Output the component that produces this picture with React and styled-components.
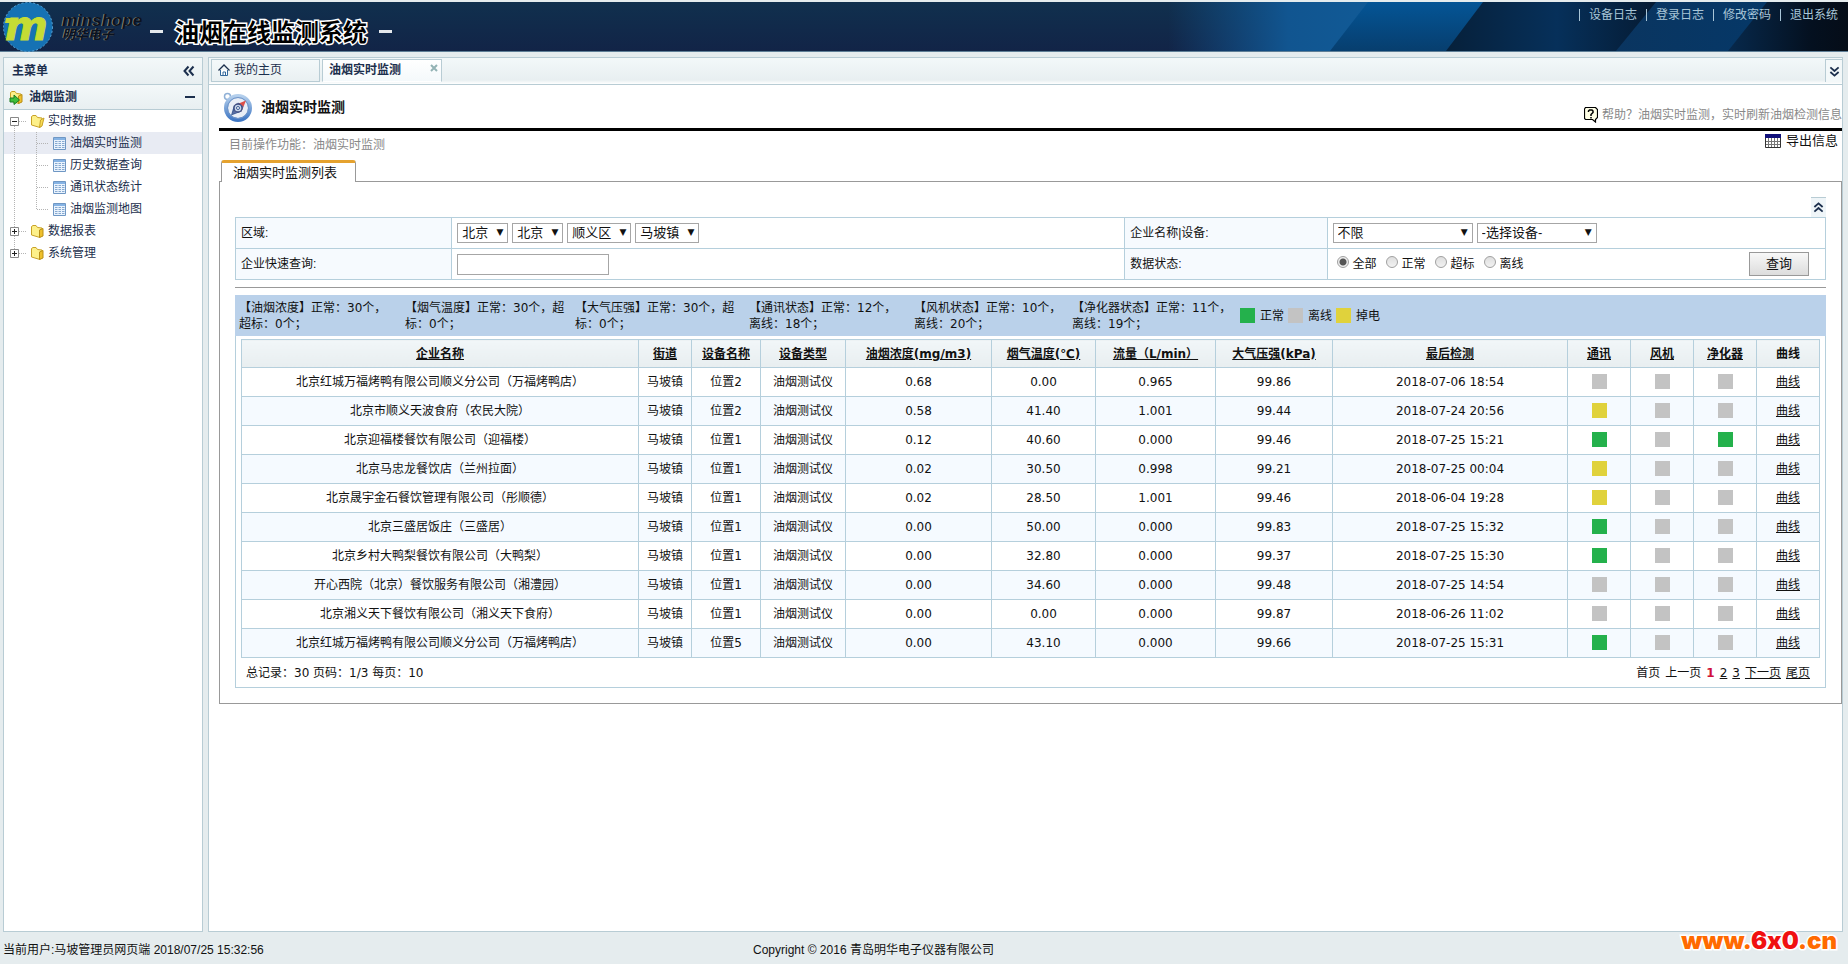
import React, { useState } from 'react';
import styled, { createGlobalStyle } from 'styled-components';

const cjk = '"Noto Sans CJK SC", sans-serif';
const ui = `"Liberation Sans", ${cjk}`;
const wide = `"DejaVu Sans", ${cjk}`;
const line = '#b8ccd4';
const grid = '#b5cfdc';
const ink = '#1c2f4d';

const GlobalStyle = createGlobalStyle`
  *, *::before, *::after { box-sizing: border-box; }
  body { margin: 0; background: #e5ecee; font: 12px/16px ${ui}; color: #111; }
  ul { list-style: none; margin: 0; padding: 0; }
  svg { display: block; flex: none; }
  button, select, input { font: inherit; color: inherit; }
`;

const Page = styled.div`
  position: relative;
  display: flex;
  flex-direction: column;
  min-height: 100vh;
  padding-top: 2px;
`;

/* ---------- banner ---------- */
const Banner = styled.header`
  position: relative;
  display: flex;
  align-items: flex-start;
  height: 50px;
  padding-right: 10px;
  background: linear-gradient(#10304e, #122447);
  border-bottom: 1px solid #5f7f97;
`;
const BannerArt = styled.svg`
  position: absolute;
  top: 0;
  right: 0;
`;
const Brand = styled.div`
  display: flex;
  flex-direction: column;
  width: 95px;
  padding: 12px 0 0 7px;
  font: italic bold 17px/14px ${ui};
  color: #0b1320;
  text-shadow: -1px 0 0 #8a8478;
`;
const BrandSub = styled.span`
  font-size: 13px;
  line-height: 14px;
`;
const SystemTitle = styled.h1`
  display: flex;
  align-items: center;
  gap: 12px;
  margin: 0;
  padding-top: 13px;
  font: bold 24px/32px ${cjk};
  color: #000;
  -webkit-text-stroke: 3px #fff;
  paint-order: stroke fill;
`;
const TitleDash = styled.span`
  width: 13px;
  height: 3px;
  background: #e4e8ec;
`;
const BannerLinks = styled.nav`
  position: relative;
  display: flex;
  margin-left: auto;
  padding-top: 5px;
`;
const BannerLink = styled.a`
  display: flex;
  align-items: center;
  color: #a9c6d8;
  text-decoration: none;
  &::before {
    content: '';
    width: 1px;
    height: 12px;
    margin: 0 9px;
    background: #a9c6d8;
  }
`;

/* ---------- frame ---------- */
const Frame = styled.div`
  display: flex;
  flex: 1;
  gap: 5px;
  padding: 5px 5px 0 3px;
`;
const Sidebar = styled.aside`
  flex: none;
  width: 200px;
  background: #fff;
  border: 1px solid ${line};
`;
const SideHead = styled.div`
  display: flex;
  align-items: center;
  justify-content: space-between;
  height: ${p => p.$h}px;
  padding: 0 7px 0 ${p => p.$pad}px;
  border-bottom: 1px solid ${line};
  background: linear-gradient(#f3f8f9, #e8eff1);
  color: ${ink};
  font-weight: bold;
`;
const HeadLabel = styled.span`
  display: flex;
  align-items: center;
  gap: 5px;
`;
const TreeLink = styled.a`
  display: flex;
  align-items: center;
  height: 22px;
  background: ${p => (p.$active ? '#e8ebf3' : 'transparent')};
  color: ${ink};
  text-decoration: none;
`;
const IconSlot = styled.span`
  width: 22px;
  padding-left: 4px;
`;
const Main = styled.main`
  flex: 1;
  min-width: 0;
  background: #fff;
  border: 1px solid ${line};
`;
const TabStrip = styled.div`
  display: flex;
  gap: 2px;
  height: 27px;
  padding: 1px 0 2px 2px;
  border-bottom: 1px solid ${line};
  background: linear-gradient(#f3f8f9, #e8eff1 22px, #fff);
`;
const PageTab = styled.button`
  display: flex;
  gap: 4px;
  width: ${p => (p.$active ? 120 : 109)}px;
  padding: 2px 3px 3px 6px;
  border: 1px solid ${line};
  border-bottom-color: ${p => (p.$active ? 'transparent' : line)};
  background: ${p => (p.$active ? 'linear-gradient(#fff, #f4f9fb)' : 'linear-gradient(#f4f9fa, #e9f0f2)')};
  color: ${ink};
  font-weight: ${p => (p.$active ? 'bold' : 'normal')};
  text-align: left;
  & > svg { margin-top: 2px; }
`;
const TabText = styled.span`
  flex: 1;
`;
const StripButton = styled.button`
  display: flex;
  align-items: center;
  justify-content: center;
  width: 17px;
  margin-left: auto;
  padding: 0;
  border: 0;
  border-left: 1px solid ${line};
  border-top: 1px solid ${line};
  background: #f3f8f9;
`;

/* ---------- content ---------- */
const Content = styled.div`
  padding-left: 10px;
`;
const TitleRow = styled.div`
  display: flex;
  align-items: center;
  height: 46px;
  padding-left: 4px;
  border-bottom: 3px solid #000;
`;
const PageTitle = styled.h2`
  flex: 1;
  margin: 0;
  padding-left: 8px;
  font: bold 14px/20px ${ui};
`;
const Help = styled.span`
  display: flex;
  align-items: center;
  gap: 4px;
  padding-top: 16px;
  color: #888;
`;
const SubRow = styled.div`
  display: flex;
  justify-content: space-between;
  height: 29px;
  padding: 0 4px 0 10px;
`;
const Crumb = styled.span`
  padding-top: 6px;
  color: #888;
`;
const Export = styled.a`
  display: flex;
  align-items: center;
  gap: 5px;
  height: 20px;
  color: #111;
  font-size: 13px;
  text-decoration: none;
`;
const BoxTab = styled.h3`
  position: relative;
  width: 135px;
  height: 22px;
  margin: 0 0 -1px 2px;
  padding-left: 11px;
  border: 1px solid #999;
  border-top: 3px solid #e5a22f;
  border-bottom: 0;
  border-radius: 3px 3px 0 0;
  background: #fff;
  font: 13px/20px ${ui};
`;
const Box = styled.section`
  padding: 15px;
  border: 1px solid #999;
`;
const CollapseButton = styled.button`
  display: flex;
  align-items: center;
  justify-content: center;
  width: 15px;
  height: 20px;
  margin-left: auto;
  padding: 0;
  border: 0;
  border-top: 1px solid ${line};
  background: #eff5f8;
`;
const Query = styled.form`
  display: grid;
  grid-template-columns: 216fr 674fr 202fr 499fr;
  grid-auto-rows: 30px;
  gap: 1px;
  padding: 1px;
  background: ${grid};
`;
const QueryLabel = styled.div`
  display: flex;
  align-items: center;
  padding-left: 5px;
  background: #f6fafe;
`;
const QueryCell = styled.div`
  display: flex;
  align-items: center;
  gap: 4px;
  padding: 0 16px 0 5px;
  background: #fff;
`;
const SelectWrap = styled.span`
  position: relative;
  width: ${p => p.$w}px;
  &::after {
    content: '▼';
    position: absolute;
    top: 1px;
    right: 5px;
    font: 9px/16px ${wide};
    pointer-events: none;
  }
`;
const Select = styled.select`
  display: block;
  appearance: none;
  width: 100%;
  height: 20px;
  padding: 0 0 0 4px;
  border: 1px solid #a6a6a6;
  border-radius: 0;
  background: #fff;
  font-size: 13px;
  line-height: 18px;
`;
const TextInput = styled.input`
  width: 152px;
  height: 21px;
  padding: 1px 3px;
  border: 1px solid #a6a6a6;
  background: #fff;
`;
const RadioLabel = styled.label`
  display: flex;
  align-items: center;
  gap: 4px;
  margin-left: 4px;
  padding-right: 1px;
`;
const Radio = styled.input`
  appearance: none;
  width: 12px;
  height: 12px;
  margin: 0 0 4px;
  border: 1px solid #a0a0a0;
  border-radius: 50%;
  background: linear-gradient(#dedede, #f2f2f2);
  &:checked { background: radial-gradient(#555 0 3px, #eee 4px); }
`;
const QueryButton = styled.button`
  width: 60px;
  height: 24px;
  margin-left: auto;
  padding: 0;
  border: 1px solid #999;
  background: linear-gradient(#f8f8f8, #dcdcdc);
  font-size: 13px;
  line-height: 20px;
`;
const Rule = styled.hr`
  height: 1px;
  margin: 7px 0;
  border: 0;
  background: #999;
`;
const Results = styled.div`
  border: 1px solid ${grid};
  border-top: 0;
  font-family: ${wide};
`;
const Stats = styled.div`
  display: flex;
  align-items: center;
  height: 41px;
  margin: 0 -1px 3px;
  padding-left: 4px;
  background: #bad1ea;
`;
const Stat = styled.p`
  width: ${p => p.$w}px;
  margin: 0;
`;
const Legend = styled.span`
  display: flex;
  align-items: center;
  gap: 5px;
  margin-right: 4px;
`;
const tones = { g: '#24b14c', n: '#c3c3c3', y: '#e0d23c' };
const Square = styled.span`
  display: block;
  width: 15px;
  height: 15px;
  background: ${p => tones[p.$tone]};
`;
const DataTable = styled.table`
  width: calc(100% - 11px);
  margin-left: 5px;
  border-collapse: collapse;
  table-layout: fixed;
  text-align: center;
`;
const HeadCell = styled.th`
  width: ${p => p.$w}px;
  height: 28px;
  padding: 0;
  border: 1px solid ${grid};
  background: linear-gradient(#f1f6f8, #e8eef0);
  text-decoration: ${p => (p.$plain ? 'none' : 'underline')};
  white-space: nowrap;
`;
const Row = styled.tr`
  &:nth-child(even) { background: #f5faff; }
`;
const Cell = styled.td`
  height: 29px;
  padding: 0;
  border: 1px solid ${grid};
  white-space: nowrap;
  & > ${Square} { margin: 0 auto 1px; }
`;
const TextLink = styled.a`
  color: #111;
`;
const Pager = styled.div`
  display: flex;
  align-items: center;
  justify-content: space-between;
  height: 29px;
  padding: 0 15px 0 10px;
`;
const PageLinks = styled.nav`
  display: flex;
  gap: 5px;
`;
const Current = styled.strong`
  color: #d0103a;
`;
const Footer = styled.footer`
  display: grid;
  grid-template-columns: 750fr 1092fr;
  align-items: center;
  height: 32px;
  padding: 4px 3px 0;
`;
const Watermark = styled.div`
  position: absolute;
  right: 11px;
  bottom: 9px;
  color: #ff6a00;
  font: 900 24px/28px Inter, ${ui};
  font-feature-settings: 'calt' 0;
  -webkit-text-stroke: 3px #fff;
  paint-order: stroke fill;
`;
const WatermarkMid = styled.span`
  color: #f01010;
`;

/* ---------- icons ---------- */
const Logo = () => (
  <svg width="55" height="50" viewBox="0 0 55 50">
    <circle cx="28" cy="25" r="24.500" fill="#1672b4" stroke="#5aa4d6" strokeDasharray="2 2" />
    <path d="M6 16h12v5H5z" fill="#c6dc34" />
    <text x="5" y="38" fontFamily="DejaVu Sans" fontSize="41" fontWeight="bold" fontStyle="italic" fill="#c6dc34" stroke="#c6dc34">m</text>
  </svg>
);
const Chevrons = ({ dir, size = 12 }) => {
  const turn = { left: 0, up: 90, down: -90 }[dir];
  return (
    <svg width={size} height={size} viewBox="0 0 12 12">
      <path transform={`rotate(${turn} 6 6)`} d="M5.500 1.500 1.500 6l4 4.500M10.500 1.500 6.500 6l4 4.500" fill="none" stroke={ink} strokeWidth="2" />
    </svg>
  );
};
const Minus = () => (
  <svg width="10" height="10" viewBox="0 0 10 10"><path d="M0 5h10" stroke={ink} strokeWidth="2" /></svg>
);
const Folder = ({ open, arrow }) => (
  <svg width="15" height="15" viewBox="0 0 15 15">
    <path d="M1.500 2.500 3 1.500h3l1.500 2 4.500.5v6l-2 3.500L1.500 11z" fill="#fdf08a" stroke="#c9a227" />
    {open
      ? <path d="M9.500 13.500 10.500 6l3.500-2-2 8z" fill="#f8dc55" stroke="#c9a227" />
      : <path d="M9.500 13.500V6L13 4.500v7.500z" fill="#efc02c" stroke="#b98f16" />}
    {arrow && <path d="M1 8h4V5l5.500 5L5 14.500V12H1z" fill="#3fbf3a" stroke="#1b7a22" />}
  </svg>
);
const Sheet = () => (
  <svg width="14" height="13" viewBox="0 0 14 13">
    <path d="M1.500.5h12v12h-12z" fill="#eaf3fd" stroke="#6f97c4" />
    <path d="M2 1h11v2H2z" fill="#86b3e4" />
    <path d="M3 4.500h2.500M3 6.500h2.500M3 8.500h2.500M3 10.500h2.500M6.500 4.500h2.500M6.500 6.500h2.500M6.500 8.500h2.500M6.500 10.500h2.500M10 4.500h2.500M10 6.500h2.500M10 8.500h2.500M10 10.500h2.500" stroke="#86a9d0" />
  </svg>
);
const Joint = ({ kind }) => {
  const stems = { minus: 'M10.500 16v6', end: 'M10.500 0v11', plusEnd: 'M10.500 0v7' };
  return (
    <svg width="22" height="22" viewBox="0 0 22 22">
      <path d={stems[kind] || 'M10.500 0v22'} stroke="#b4b4b4" strokeDasharray="1 1" />
      {kind !== 'line' && <path d="M11 11.500h11" stroke="#b4b4b4" strokeDasharray="1 1" />}
      {(kind === 'minus' || kind.startsWith('plus')) && (
        <>
          <path d="M6.500 7.500h8v8h-8z" fill="#fff" stroke="#888" />
          <path d={kind === 'minus' ? 'M8 11.500h5' : 'M8 11.500h5M10.500 9v5'} stroke="#222" />
        </>
      )}
    </svg>
  );
};
const Home = () => (
  <svg width="12" height="12" viewBox="0 0 12 12">
    <path d="M2.500 6v5.500h7V6" fill="#fff" stroke="#33689c" />
    <path d="M.5 6.500 6 1l5.500 5.500" fill="none" stroke="#1c2f4d" strokeWidth="1.300" />
    <path d="M5 11.500V8h2.500v3.500" fill="none" stroke="#33689c" />
  </svg>
);
const Close = () => (
  <svg width="8" height="8" viewBox="0 0 8 8"><path d="M1 1l6 6M7 1 1 7" stroke="#93b3b5" strokeWidth="2" /></svg>
);
const Compass = () => (
  <svg width="30" height="30" viewBox="0 0 30 30">
    <defs>
      <linearGradient id="ring" x1="0" y1="0" x2="0" y2="1">
        <stop offset="0" stopColor="#b4cfec" /><stop offset="1" stopColor="#3f77c4" />
      </linearGradient>
    </defs>
    <circle cx="4.500" cy="4.500" r="3" fill="none" stroke="#8fb0d6" strokeWidth="1.500" />
    <circle cx="15" cy="16" r="12" fill="#e9eef6" stroke="url(#ring)" strokeWidth="4" />
    <circle cx="15" cy="16" r="10.500" fill="none" stroke="#6f94c8" />
    <path d="M8 23.500 11 13l7.500 6.500z" fill="#3d5c94" />
    <path d="M23 8.500 12 13l6.500 6.500z" fill="#dd4f48" />
    <path d="M15 10.500 9 22l9.500-2.500 2-5z" fill="#5b6fa3" />
    <circle cx="15" cy="16" r="4" fill="#c5d3e8" stroke="#3d4c80" strokeWidth="1.300" />
    <circle cx="15" cy="16" r="1.500" fill="#fff" stroke="#3d5c94" />
  </svg>
);
const HelpIcon = () => (
  <svg width="14" height="16" viewBox="0 0 14 16">
    <path d="M1.500.5h10l2 2v8l-2 2v2.500l-3-2.500h-7l-1-1V2z" fill="#ffffe6" stroke="#000" strokeWidth="1.200" />
    <path d="M4.500 5V4l1-1h2.500l1 1v1.500L7 7.500V9M7 10v1.500" fill="none" stroke="#000" strokeWidth="1.500" />
  </svg>
);
const GridIcon = () => (
  <svg width="16" height="14" viewBox="0 0 16 14">
    <path d="M.5.500h15v13H.5z" fill="#fff" stroke="#333" />
    <path d="M0 0h16v4H0z" fill="#10107a" />
    <path d="M3.500 4v9M6.500 4v9M9.500 4v9M12.500 4v9M1 7.500h14M1 10.500h14" stroke="#777" />
  </svg>
);
const Streaks = () => (
  <BannerArt width="680" height="49" viewBox="0 0 680 49" aria-hidden="true">
    <defs>
      <linearGradient id="s1"><stop offset="0" stopColor="#115590" stopOpacity="0" /><stop offset=".6" stopColor="#115590" /><stop offset="1" stopColor="#115a96" /></linearGradient>
      <linearGradient id="s2" x1="0" y1="0" x2="0" y2="1"><stop offset="0" stopColor="#045596" /><stop offset="1" stopColor="#073e6e" /></linearGradient>
      <linearGradient id="s3"><stop offset="0" stopColor="#06203a" /><stop offset=".5" stopColor="#06305a" /><stop offset="1" stopColor="#05182e" /></linearGradient>
      <linearGradient id="s4"><stop offset="0" stopColor="#0a3560" /><stop offset="1" stopColor="#053868" /></linearGradient>
      <linearGradient id="s5"><stop offset="0" stopColor="#07294c" /><stop offset=".7" stopColor="#04101f" /><stop offset="1" stopColor="#050d18" /></linearGradient>
    </defs>
    <path d="M0 0h200v49H0z" fill="url(#s1)" />
    <path d="M200 0h120v49H162z" fill="url(#s2)" />
    <path d="M315 0h185v49H278z" fill="url(#s3)" />
    <path d="M488 0h120v49H448z" fill="url(#s4)" />
    <path d="M599 0h81v49H560z" fill="url(#s5)" />
  </BannerArt>
);

/* ---------- data ---------- */
const tree = [
  { text: '实时数据', joints: ['minus'], folder: true, open: true },
  { text: '油烟实时监测', joints: ['line', 'mid'], active: true },
  { text: '历史数据查询', joints: ['line', 'mid'] },
  { text: '通讯状态统计', joints: ['line', 'mid'] },
  { text: '油烟监测地图', joints: ['line', 'end'] },
  { text: '数据报表', joints: ['plus'], folder: true },
  { text: '系统管理', joints: ['plusEnd'], folder: true },
];
const stats = [
  [166, '【油烟浓度】正常：30个，', '超标：0个；'],
  [170, '【烟气温度】正常：30个，超', '标：0个；'],
  [174, '【大气压强】正常：30个，超', '标：0个；'],
  [165, '【通讯状态】正常：12个，', '离线：18个；'],
  [158, '【风机状态】正常：10个，', '离线：20个；'],
  [168, '【净化器状态】正常：11个，', '离线：19个；'],
];
const columns = [
  ['企业名称', 397], ['街道', 53], ['设备名称', 69], ['设备类型', 85], ['油烟浓度(mg/m3)', 146],
  ['烟气温度(℃)', 104], ['流量（L/min）', 120], ['大气压强(kPa)', 117], ['最后检测', 235],
  ['通讯', 63], ['风机', 63], ['净化器', 63], ['曲线', 63],
];
const rows = [
  ['北京红城万福烤鸭有限公司顺义分公司（万福烤鸭店）', '位置2', '0.68', '0.00', '0.965', '99.86', '2018-07-06 18:54', 'nnn'],
  ['北京市顺义天波食府（农民大院）', '位置2', '0.58', '41.40', '1.001', '99.44', '2018-07-24 20:56', 'ynn'],
  ['北京迎福楼餐饮有限公司（迎福楼）', '位置1', '0.12', '40.60', '0.000', '99.46', '2018-07-25 15:21', 'gng'],
  ['北京马忠龙餐饮店（兰州拉面）', '位置1', '0.02', '30.50', '0.998', '99.21', '2018-07-25 00:04', 'ynn'],
  ['北京晟宇金石餐饮管理有限公司（彤顺德）', '位置1', '0.02', '28.50', '1.001', '99.46', '2018-06-04 19:28', 'ynn'],
  ['北京三盛居饭庄（三盛居）', '位置1', '0.00', '50.00', '0.000', '99.83', '2018-07-25 15:32', 'gnn'],
  ['北京乡村大鸭梨餐饮有限公司（大鸭梨）', '位置1', '0.00', '32.80', '0.000', '99.37', '2018-07-25 15:30', 'gnn'],
  ['开心西院（北京）餐饮服务有限公司（湘澧园）', '位置1', '0.00', '34.60', '0.000', '99.48', '2018-07-25 14:54', 'nnn'],
  ['北京湘义天下餐饮有限公司（湘义天下食府）', '位置1', '0.00', '0.00', '0.000', '99.87', '2018-06-26 11:02', 'nnn'],
  ['北京红城万福烤鸭有限公司顺义分公司（万福烤鸭店）', '位置5', '0.00', '43.10', '0.000', '99.66', '2018-07-25 15:31', 'gnn'],
];

const Dropdown = ({ w, label, value }) => (
  <SelectWrap $w={w}>
    <Select aria-label={label} defaultValue={value}><option>{value}</option></Select>
  </SelectWrap>
);

export default function App() {
  const [state, setState] = useState('全部');
  return (
    <Page>
      <GlobalStyle />
      <Banner>
        <Streaks />
        <Logo />
        <Brand>minshope<BrandSub>明华电子</BrandSub></Brand>
        <SystemTitle><TitleDash />油烟在线监测系统<TitleDash /></SystemTitle>
        <BannerLinks>
          {['设备日志', '登录日志', '修改密码', '退出系统'].map(t => <BannerLink key={t} href="#">{t}</BannerLink>)}
        </BannerLinks>
      </Banner>

      <Frame>
        <Sidebar>
          <SideHead $h={27} $pad={8}>主菜单<Chevrons dir="left" /></SideHead>
          <SideHead $h={25} $pad={5}><HeadLabel><Folder arrow />油烟监测</HeadLabel><Minus /></SideHead>
          <ul>
            {tree.map(n => (
              <li key={n.text}>
                <TreeLink href="#" $active={n.active}>
                  {n.joints.map((k, i) => <Joint key={i} kind={k} />)}
                  <IconSlot>{n.folder ? <Folder open={n.open} /> : <Sheet />}</IconSlot>
                  {n.text}
                </TreeLink>
              </li>
            ))}
          </ul>
        </Sidebar>

        <Main>
          <TabStrip>
            <PageTab><Home /><TabText>我的主页</TabText></PageTab>
            <PageTab $active><TabText>油烟实时监测</TabText><Close /></PageTab>
            <StripButton aria-label="展开"><Chevrons dir="down" size={11} /></StripButton>
          </TabStrip>
          <Content>
            <TitleRow>
              <Compass />
              <PageTitle>油烟实时监测</PageTitle>
              <Help><HelpIcon />帮助？油烟实时监测，实时刷新油烟检测信息</Help>
            </TitleRow>
            <SubRow>
              <Crumb>目前操作功能：油烟实时监测</Crumb>
              <Export href="#"><GridIcon />导出信息</Export>
            </SubRow>
            <BoxTab>油烟实时监测列表</BoxTab>
            <Box>
              <CollapseButton aria-label="收起"><Chevrons dir="up" size={11} /></CollapseButton>
              <Query onSubmit={e => e.preventDefault()}>
                <QueryLabel>区域:</QueryLabel>
                <QueryCell>
                  <Dropdown w={51} label="省" value="北京" />
                  <Dropdown w={51} label="市" value="北京" />
                  <Dropdown w={64} label="区" value="顺义区" />
                  <Dropdown w={64} label="镇" value="马坡镇" />
                </QueryCell>
                <QueryLabel>企业名称|设备:</QueryLabel>
                <QueryCell>
                  <Dropdown w={140} label="企业名称" value="不限" />
                  <Dropdown w={120} label="设备" value="-选择设备-" />
                </QueryCell>
                <QueryLabel as="label" htmlFor="quick">企业快速查询:</QueryLabel>
                <QueryCell><TextInput id="quick" type="text" /></QueryCell>
                <QueryLabel>数据状态:</QueryLabel>
                <QueryCell>
                  {['全部', '正常', '超标', '离线'].map(t => (
                    <RadioLabel key={t}>
                      <Radio type="radio" name="state" checked={state === t} onChange={() => setState(t)} />{t}
                    </RadioLabel>
                  ))}
                  <QueryButton type="submit">查询</QueryButton>
                </QueryCell>
              </Query>
              <Rule />
              <Results>
                <Stats>
                  {stats.map(([w, a, b]) => <Stat key={a} $w={w}>{a}<br />{b}</Stat>)}
                  <Legend><Square $tone="g" />正常</Legend>
                  <Legend><Square $tone="n" />离线</Legend>
                  <Legend><Square $tone="y" />掉电</Legend>
                </Stats>
                <DataTable>
                  <thead>
                    <tr>{columns.map(([t, w]) => <HeadCell key={t} $w={w} $plain={t === '曲线'}>{t}</HeadCell>)}</tr>
                  </thead>
                  <tbody>
                    {rows.map(([name, place, ...rest], i) => (
                      <Row key={i}>
                        <Cell>{name}</Cell>
                        <Cell>马坡镇</Cell>
                        <Cell>{place}</Cell>
                        <Cell>油烟测试仪</Cell>
                        {rest.slice(0, 5).map((v, j) => <Cell key={j}>{v}</Cell>)}
                        {rest[5].split('').map((t, j) => <Cell key={j}><Square $tone={t} /></Cell>)}
                        <Cell><TextLink href="#">曲线</TextLink></Cell>
                      </Row>
                    ))}
                  </tbody>
                </DataTable>
                <Pager>
                  <span>总记录：30 页码：1/3 每页：10</span>
                  <PageLinks>
                    <span>首页</span><span>上一页</span><Current>1</Current>
                    <TextLink href="#">2</TextLink><TextLink href="#">3</TextLink>
                    <TextLink href="#">下一页</TextLink><TextLink href="#">尾页</TextLink>
                  </PageLinks>
                </Pager>
              </Results>
            </Box>
          </Content>
        </Main>
      </Frame>

      <Footer>
        <span>当前用户:马坡管理员网页端 2018/07/25 15:32:56</span>
        <span>Copyright © 2016 青岛明华电子仪器有限公司</span>
      </Footer>
      <Watermark>www.<WatermarkMid>6x0</WatermarkMid>.cn</Watermark>
    </Page>
  );
}
